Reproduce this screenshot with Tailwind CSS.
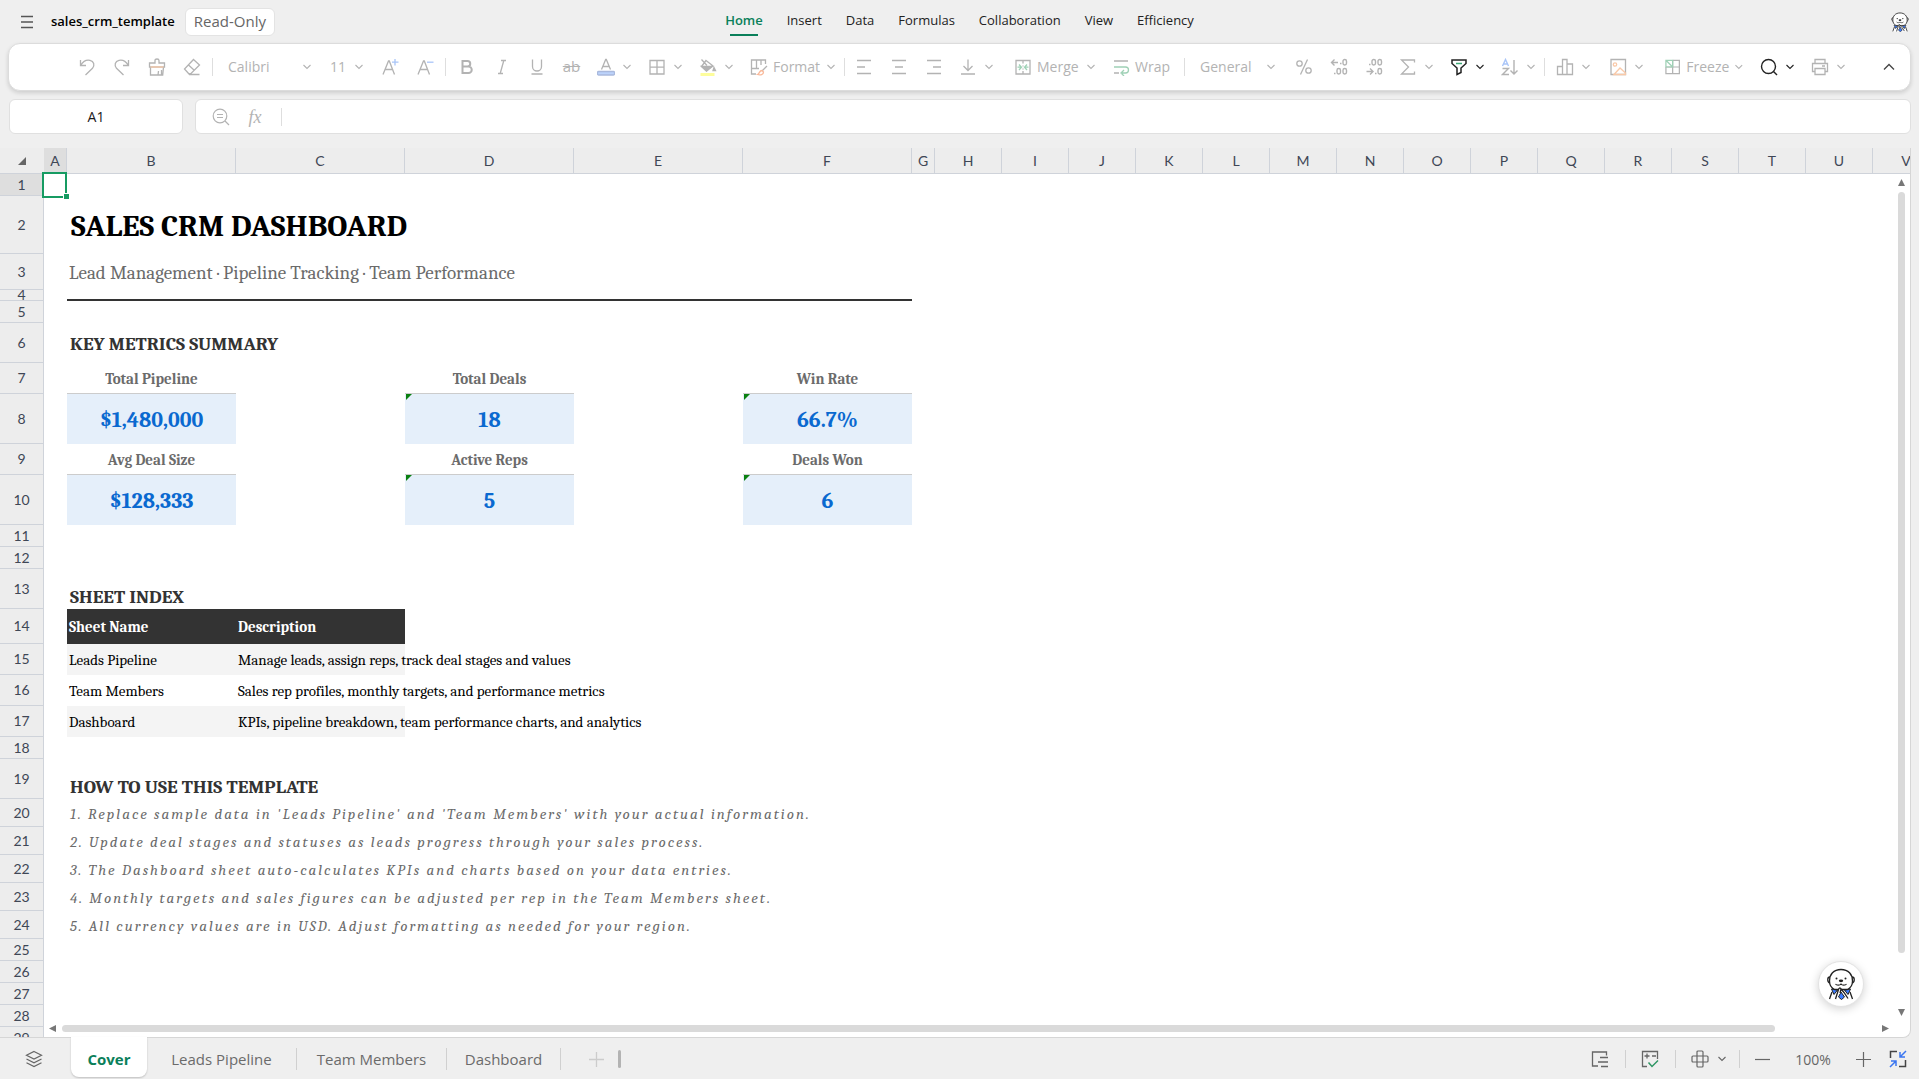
<!DOCTYPE html>
<html lang="en">
  <head>
    <meta charset="UTF-8" />
    <meta name="viewport" content="width=device-width, initial-scale=1.0" />
    <title>sales_crm_template</title>
    <script src="https://cdn.jsdelivr.net/npm/@tailwindcss/browser@4"></script>
  </head>

  <body class="h-screen flex flex-col overflow-hidden bg-[#efefef] text-[#1a1a1a] font-['Segoe_UI','Open_Sans',sans-serif]">
    <!-- Shared icons -->
    <svg class="hidden">
      <symbol id="chevron" viewBox="0 0 10 10">
        <path d="M1.500 3l3.500 3.500L8.500 3" fill="none" stroke="currentColor" stroke-width="1.100" />
      </symbol>
      <symbol id="otter" viewBox="0 0 32 32">
        <path d="M5 15c-3-1-3-6 0-6M27 15c3-1 3-6 0-6" fill="#fff" stroke="#222" stroke-width="1.300" />
        <path d="M7 20L4 31h24l-3-11z" fill="#fff" />
        <path d="M6.500 21l6 1-3.500 4.500zM25.500 21l-6 1 3.500 4.500z" fill="#3b7cff" stroke="#222" />
        <path d="M16 24l-2.500 5 3 2.500 3-2.500z" fill="#3b7cff" stroke="#222" />
        <path d="M7 24L4.500 31M25 24l2.500 7" stroke="#222" stroke-width="1.300" />
        <path d="M16 1.500c7.500 0 11.500 5 11.500 11.500 0 4-2 7-5 8.500h-13c-3-1.500-5-4.500-5-8.500C4.500 6.500 8.500 1.500 16 1.500z" fill="#fff" stroke="#222" stroke-width="1.300" />
        <path d="M10.500 31l3-9.500c.8-2.500 3-1.500 2.300.5l-.8 3M23 30.500l-4-6-3-3.500" fill="#fff" stroke="#222" stroke-width="1.300" />
        <path d="M10.500 16c1 1.500 4.500 1.500 5.500 0 1 1.500 4.500 1.500 5.500 0" fill="none" stroke="#222" stroke-width="1.100" />
        <ellipse cx="16" cy="12.800" rx="2.200" ry="1.400" fill="#222" />
        <circle cx="11.500" cy="10.500" r="1" fill="#222" />
        <circle cx="20.500" cy="10.500" r="1" fill="#222" />
      </symbol>
    </svg>

    <!-- Title bar -->
    <header class="h-[43px] shrink-0 flex justify-between px-[9px]">
      <div class="flex-1 flex items-center gap-[10px]">
        <button aria-label="Menu" class="p-[10px] pr-[6px]">
          <svg class="size-4" viewBox="0 0 16 16" stroke="#555" stroke-width="1.300"><path d="M2 2.500h12M2 8h12M2 13.500h12" /></svg>
        </button>
        <h1 class="text-[13px] font-semibold text-black">sales_crm_template</h1>
        <span class="h-[28px] flex items-center rounded-md border border-[#e3e3e3] bg-white px-2 text-[15px] text-[#666]">Read-Only</span>
      </div>
      <nav class="flex items-center gap-6 text-[13px] text-[#222] pb-[2px]">
        <a href="#" class="relative font-semibold text-[#0a7f5a]">Home<span class="absolute left-1/2 -bottom-[6px] -ml-[14px] h-[2px] w-[28px] bg-[#0a7f5a]"></span></a>
        <a href="#">Insert</a>
        <a href="#">Data</a>
        <a href="#">Formulas</a>
        <a href="#">Collaboration</a>
        <a href="#">View</a>
        <a href="#">Efficiency</a>
      </nav>
      <div class="flex-1 flex items-center justify-end">
        <button aria-label="Assistant"><svg class="size-5"><use href="#otter" /></svg></button>
      </div>
    </header>

    <!-- Toolbar -->
    <section aria-label="Toolbar" class="mx-2 h-[48px] shrink-0 flex items-center rounded-xl border border-[#dcdcdc] bg-white pb-px pl-[60px] pr-[12px] shadow-[0_2px_4px_rgba(0,0,0,0.14)] text-[14px] text-[#b3b3b3]">
      <button disabled aria-label="Undo" class="w-[35px] flex justify-center">
        <svg class="size-[18px]" viewBox="0 0 18 18" fill="none" stroke="currentColor" stroke-width="1.300"><path d="M2.500 2v5.500H8M2.800 7.200C5 3.500 8.500 1.500 12 2.300c4 1 5 5 2.500 8L7.500 17" /></svg>
      </button>
      <button disabled aria-label="Redo" class="w-[35px] flex justify-center">
        <svg class="size-[18px]" viewBox="0 0 18 18" fill="none" stroke="currentColor" stroke-width="1.300"><path d="M15.500 2v5.500H10M15.200 7.200C13 3.500 9.500 1.500 6 2.300c-4 1-5 5-2.500 8l7 6.700" /></svg>
      </button>
      <button disabled aria-label="Format painter" class="w-[35px] flex justify-center">
        <svg class="size-[18px]" viewBox="0 0 18 18" fill="none" stroke="currentColor" stroke-width="1.300"><path d="M7 5V2.500c0-1 .7-1.500 2-1.500s2 .5 2 1.500V5h5.500v4h-15V5zM2.500 9v8h12.200l.8-8M10 17l.5-4M13.500 17V12" /><path d="M2.500 9h13" stroke="#f9c9a8" /></svg>
      </button>
      <button disabled aria-label="Clear format" class="w-[35px] flex justify-center">
        <svg class="size-[18px]" viewBox="0 0 18 18" fill="none" stroke="currentColor" stroke-width="1.300"><path d="M10.500 1.500l6 5.500-8.500 8.500-2 .5-4.500-5zM5.500 7l6 5.500M6 16.500h10.500" /></svg>
      </button>
      <span class="mx-[3px] h-[18px] w-px bg-[#dedede]"></span>
      <label class="relative flex items-center">
        <select disabled aria-label="Font" class="w-[96px] appearance-none pl-3 opacity-100"><option>Calibri</option></select>
        <svg class="pointer-events-none absolute right-0 size-[10px]"><use href="#chevron" /></svg>
      </label>
      <label class="relative flex items-center">
        <select disabled aria-label="Font size" class="w-[52px] appearance-none pl-[18px] opacity-100"><option>11</option></select>
        <svg class="pointer-events-none absolute right-0 size-[10px]"><use href="#chevron" /></svg>
      </label>
      <button disabled aria-label="Increase font size" class="ml-2 w-[35px] flex justify-center">
        <svg class="size-[18px] overflow-visible" viewBox="0 0 18 18" fill="none" stroke="currentColor" stroke-width="1.300"><path d="M2 16.500L7.500 3h.8L13.500 16.500M4 11.500h8" /><path d="M14 1v6.500M11 4.200h6.500" stroke="#a9c5f8" /></svg>
      </button>
      <button disabled aria-label="Decrease font size" class="w-[35px] flex justify-center">
        <svg class="size-[18px] overflow-visible" viewBox="0 0 18 18" fill="none" stroke="currentColor" stroke-width="1.300"><path d="M2 16.500L7.500 3h.8L13.500 16.500M4 11.500h8" /><path d="M11 4.200h6.500" stroke="#a9c5f8" /></svg>
      </button>
      <span class="mx-[3px] h-[18px] w-px bg-[#dedede]"></span>
      <button disabled aria-label="Bold" class="w-[35px] flex justify-center">
        <svg class="size-[18px]" viewBox="0 0 18 18" fill="none" stroke="currentColor" stroke-width="2"><path d="M4.500 3h5a2.700 2.700 0 010 5.500h-5zM4.500 8.500h6a3.200 3.200 0 010 6.500h-6z" /></svg>
      </button>
      <button disabled aria-label="Italic" class="w-[35px] flex justify-center">
        <svg class="size-[18px]" viewBox="0 0 18 18" fill="none" stroke="currentColor" stroke-width="1.300"><path d="M8 2.500h5M5 15.500h5M10.800 2.500L7.200 15.500" /></svg>
      </button>
      <button disabled aria-label="Underline" class="w-[35px] flex justify-center">
        <svg class="size-[18px]" viewBox="0 0 18 18" fill="none" stroke="currentColor" stroke-width="1.300"><path d="M4.500 1.500v7a4.500 4.500 0 009 0v-7M3.500 16h11" /></svg>
      </button>
      <button disabled aria-label="Strikethrough" class="w-[35px] flex justify-center text-[15px] line-through leading-none">ab</button>
      <button disabled aria-label="Font color" class="w-[51px] px-2 flex items-center justify-between">
        <svg class="size-[18px]" viewBox="0 0 18 18" fill="none" stroke="currentColor" stroke-width="1.300"><path d="M4.500 11.500L8.700 1.500h.6l4.200 10M6 8.500h6" /><rect x=".5" y="13.500" width="17" height="3.500" rx="1" fill="#bcd3fb" stroke="#a9b9dd" /></svg>
        <svg class="size-[10px]"><use href="#chevron" /></svg>
      </button>
      <button disabled aria-label="Borders" class="w-[51px] px-2 flex items-center justify-between">
        <svg class="size-[18px]" viewBox="0 0 18 18" fill="none" stroke="currentColor" stroke-width="1.300"><path d="M2 2.500h14v13.500H2zM9 2.500V16M2 9.200h14" /></svg>
        <svg class="size-[10px]"><use href="#chevron" /></svg>
      </button>
      <button disabled aria-label="Fill color" class="w-[51px] px-2 flex items-center justify-between">
        <svg class="size-[18px]" viewBox="0 0 18 18" fill="none" stroke="currentColor" stroke-width="1.300"><path d="M7 2.500L13.500 7.500 7.500 13 2.500 8.500zM2.500 1.500L8 7.500" /><path d="M2.500 8.500h11L7.500 13zM15 9.500l1.500 3h-2.500z" fill="currentColor" /><rect x="1.500" y="15" width="14" height="3" fill="#fdfd9c" stroke="none" /></svg>
        <svg class="size-[10px]"><use href="#chevron" /></svg>
      </button>
      <button disabled class="w-[102px] px-2 flex items-center gap-[5px]">
        <svg class="size-[18px]" viewBox="0 0 18 18" fill="none" stroke="currentColor" stroke-width="1.300"><path d="M6 16H1.500V2h14v4M1.500 10.500H9M6.500 2v8.500M11 2v5M17 8l-5 5" /><path d="M12 12.500c-3 0-2 3-4.500 4 3 1 6 0 6-2.500z" stroke="#f9b99a" /></svg>
        Format
        <svg class="ml-auto size-[10px]"><use href="#chevron" /></svg>
      </button>
      <span class="mr-px h-[18px] w-px bg-[#dedede]"></span>
      <button disabled aria-label="Align left" class="w-[35px] flex justify-center">
        <svg class="size-[18px]" viewBox="0 0 18 18" stroke="currentColor" stroke-width="1.300"><path d="M2 2.500h14M2 9h8M2 15.500h14" /></svg>
      </button>
      <button disabled aria-label="Align center" class="w-[35px] flex justify-center">
        <svg class="size-[18px]" viewBox="0 0 18 18" stroke="currentColor" stroke-width="1.300"><path d="M2 2.500h14M5 9h8M2 15.500h14" /></svg>
      </button>
      <button disabled aria-label="Align right" class="w-[35px] flex justify-center">
        <svg class="size-[18px]" viewBox="0 0 18 18" stroke="currentColor" stroke-width="1.300"><path d="M2 2.500h14M8 9h8M2 15.500h14" /></svg>
      </button>
      <button disabled aria-label="Vertical align" class="w-[51px] px-2 flex items-center justify-between">
        <svg class="size-[18px]" viewBox="0 0 18 18" fill="none" stroke="currentColor" stroke-width="1.300"><path d="M9 1.500v11M4.500 8L9 12.500 13.500 8M2 16h14" /></svg>
        <svg class="size-[10px]"><use href="#chevron" /></svg>
      </button>
      <button disabled class="ml-1 w-[98px] px-2 flex items-center gap-[5px]">
        <svg class="size-[18px]" viewBox="0 0 18 18" fill="none" stroke="currentColor" stroke-width="1.300"><path d="M2 2.500h14v13.500H2zM9 2.500v3M9 13v3M9 7.500v1M9 10.500v1" /><path d="M3.500 9.200H7M5 6.500l2.500 2.700L5 12M14.500 9.200H11M13 6.500l-2.500 2.700L13 12" stroke="#9fd1b6" /></svg>
        Merge
        <svg class="ml-auto size-[10px]"><use href="#chevron" /></svg>
      </button>
      <button disabled class="w-[80px] px-2 flex items-center gap-[5px]">
        <svg class="size-[18px]" viewBox="0 0 18 18" fill="none" stroke="currentColor" stroke-width="1.300"><path d="M2 3h14M2 15h5" /><path d="M2 9h11.500a3 3 0 010 6H10M12 12l-3 3 3 3" stroke="#9fd1b6" /></svg>
        Wrap
      </button>
      <span class="mr-[3px] h-[18px] w-px bg-[#dedede]"></span>
      <label class="relative flex items-center">
        <select disabled aria-label="Number format" class="w-[88px] appearance-none pl-3 opacity-100"><option>General</option></select>
        <svg class="pointer-events-none absolute right-0 size-[10px]"><use href="#chevron" /></svg>
      </label>
      <button disabled aria-label="Percent" class="ml-[10px] w-[35px] flex justify-center">
        <svg class="size-[18px]" viewBox="0 0 18 18" fill="none" stroke="currentColor" stroke-width="1.300"><circle cx="4.500" cy="5.500" r="2.700" /><circle cx="13.500" cy="12.500" r="2.700" /><path d="M12.500 1.500l-7 15" /></svg>
      </button>
      <button disabled aria-label="Decrease decimals" class="w-[35px] flex justify-center">
        <svg class="size-[18px]" viewBox="0 0 18 18" fill="none" stroke="currentColor" stroke-width="1.400"><path d="M8 4.500H2M4.500 1.500l-3 3 3 3" /><path d="M10 5.500h1.500M4 15.500h1.500" /><rect x="13" y="1.500" width="3.500" height="5.500" rx="1.700" /><rect x="7" y="10.500" width="3.500" height="5.500" rx="1.700" /><rect x="13" y="10.500" width="3.500" height="5.500" rx="1.700" /></svg>
      </button>
      <button disabled aria-label="Increase decimals" class="w-[35px] flex justify-center">
        <svg class="size-[18px]" viewBox="0 0 18 18" fill="none" stroke="currentColor" stroke-width="1.400"><path d="M1.500 13.500h6M5 10.500l3 3-3 3" /><path d="M4 6.500h1.500M10 15.500h1.500" /><rect x="7" y="1.500" width="3.500" height="5.500" rx="1.700" /><rect x="13" y="1.500" width="3.500" height="5.500" rx="1.700" /><rect x="13" y="10.500" width="3.500" height="5.500" rx="1.700" /></svg>
      </button>
      <button disabled aria-label="Sum" class="w-[51px] px-2 flex items-center justify-between">
        <svg class="size-[18px]" viewBox="0 0 18 18" fill="none" stroke="currentColor" stroke-width="1.300"><path d="M15.500 4.500V2H2.500L9.500 9l-7 7h13v-2.500" /></svg>
        <svg class="size-[10px]"><use href="#chevron" /></svg>
      </button>
      <button aria-label="Filter" class="w-[51px] px-2 flex items-center justify-between text-[#222]">
        <svg class="size-[18px]" viewBox="0 0 18 18" fill="none" stroke="currentColor" stroke-width="1.500"><path d="M2 2h14v3.500L11 10v4.500L7 16.500V10L2 5.500z" /><path d="M6 5.500h6" stroke="#3fa877" /></svg>
        <svg class="size-[10px]"><use href="#chevron" /></svg>
      </button>
      <button disabled aria-label="Sort" class="w-[51px] px-2 flex items-center justify-between">
        <svg class="size-[18px]" viewBox="0 0 18 18" fill="none" stroke="currentColor" stroke-width="1.400"><path d="M1.500 8L4.500 1.500 7.500 8M2.500 6h4" stroke="#a9c5f8" /><path d="M1.500 10.500h6l-6 6h6.500M13 2v14M9.500 12.500L13 16l3.500-3.500" /></svg>
        <svg class="size-[10px]"><use href="#chevron" /></svg>
      </button>
      <span class="mr-[3px] h-[18px] w-px bg-[#dedede]"></span>
      <button disabled aria-label="Chart" class="w-[51px] px-2 flex items-center justify-between">
        <svg class="size-[18px]" viewBox="0 0 18 18" fill="none" stroke="currentColor" stroke-width="1.300"><path d="M1.500 8.500h5V16.500h-5zM6.500 1.500h4.500v15H6.500zM11 6h5.500v10.500H11z" /></svg>
        <svg class="size-[10px]"><use href="#chevron" /></svg>
      </button>
      <button disabled aria-label="Picture" class="w-[51px] px-2 ml-[2px] flex items-center justify-between">
        <svg class="size-[18px]" viewBox="0 0 18 18" fill="none" stroke="currentColor" stroke-width="1.300"><path d="M2 16.500V1.500h14.500v15z" /><path d="M5 16.500l6-6.500 5.500 5v1.500z" stroke="#f9c9a8" /><circle cx="6" cy="6.500" r="1.700" stroke="#f9c9a8" /></svg>
        <svg class="size-[10px]"><use href="#chevron" /></svg>
      </button>
      <button disabled class="ml-1 w-[96px] px-2 flex items-center gap-[5px]">
        <svg class="size-[18px]" viewBox="0 0 18 18" fill="none" stroke="currentColor" stroke-width="1.300"><path d="M9 2h7v14H2V9M9 2v14M2 9h14" /><path d="M9 9V2H2v7zM2 2l7 7" stroke="#9fd1b6" /></svg>
        Freeze
        <svg class="ml-auto size-[10px]"><use href="#chevron" /></svg>
      </button>
      <button aria-label="Search" class="w-[51px] px-2 flex items-center justify-between text-[#222]">
        <svg class="size-[18px]" viewBox="0 0 18 18" fill="none" stroke="currentColor" stroke-width="1.400"><circle cx="8.500" cy="8.500" r="7" /><path d="M13.500 13.500l3.500 3.500" /></svg>
        <svg class="size-[10px]"><use href="#chevron" /></svg>
      </button>
      <button disabled aria-label="Print" class="w-[51px] px-2 flex items-center justify-between">
        <svg class="size-[18px]" viewBox="0 0 18 18" fill="none" stroke="currentColor" stroke-width="1.300"><path d="M4 5.500v-4h10v4M4 13.500H1.500v-8h15v8H14M4 10.500h10v6H4zM11 8h3" /></svg>
        <svg class="size-[10px]"><use href="#chevron" /></svg>
      </button>
      <button aria-label="Collapse toolbar" class="ml-auto p-[3px] text-[#444]">
        <svg class="size-3" viewBox="0 0 12 12" fill="none" stroke="currentColor" stroke-width="1.300"><path d="M1 8.500l5-5 5 5" /></svg>
      </button>
    </section>

    <!-- Formula bar -->
    <section aria-label="Formula bar" class="mt-2 ml-[9px] mr-2 h-[35px] shrink-0 flex gap-3">
      <input aria-label="Name box" value="A1" class="w-[174px] rounded-md border border-[#e0e0e0] bg-white text-center text-[14px]" />
      <div class="flex-1 flex items-center rounded-md border border-[#e0e0e0] bg-white pl-4 text-[#b3b3b3]">
        <svg class="size-[18px]" viewBox="0 0 18 18" fill="none" stroke="currentColor" stroke-width="1.200"><circle cx="8" cy="8" r="6.800" /><path d="M13 13l4 4M5 6.500h6M5 9.500h6" /></svg>
        <button disabled aria-label="Insert function" class="ml-4 w-[18px] font-['Liberation_Serif',serif] italic text-[18px] leading-none">fx</button>
        <span class="ml-[17px] h-[18px] w-px bg-[#dedede]"></span>
        <input aria-label="Formula" class="flex-1 px-2 text-[14px] outline-none" />
      </div>
    </section>

    <!-- Sheet -->
    <main class="relative mt-[14px] mr-2 flex-1 min-h-0 overflow-hidden rounded-br-lg border-r border-b border-[#d6d6d6] bg-white">
      <table class="w-[1940px] table-fixed border-separate border-spacing-0 font-['Cambria','Caladea','Liberation_Serif',serif] text-[15px] text-black whitespace-nowrap leading-none">
        <colgroup>
          <col class="w-[44px]" /><col class="w-[23px]" />
          <col class="w-[169px]" /><col class="w-[169px]" /><col class="w-[169px]" /><col class="w-[169px]" /><col class="w-[169px]" />
          <col class="w-[23px]" />
          <col class="w-[67px]" /><col class="w-[67px]" /><col class="w-[67px]" /><col class="w-[67px]" /><col class="w-[67px]" /><col class="w-[67px]" /><col class="w-[67px]" />
          <col class="w-[67px]" /><col class="w-[67px]" /><col class="w-[67px]" /><col class="w-[67px]" /><col class="w-[67px]" /><col class="w-[67px]" /><col class="w-[67px]" /><col class="w-[67px]" />
        </colgroup>
        <thead class="bg-[#ededed] font-['Lato',sans-serif] text-[14px] text-[#3f4756] [&_th]:font-normal [&_th]:border-r [&_th]:border-b [&_th]:border-[#cfd3da]">
          <tr class="h-[26px]">
            <th class="border-r-transparent!"><svg class="mx-auto size-2" viewBox="0 0 8 8"><path d="M8 0v8H0z" fill="#666" /></svg></th>
            <th class="bg-[#dedede]">A</th><th>B</th><th>C</th><th>D</th><th>E</th><th>F</th><th>G</th>
            <th>H</th><th>I</th><th>J</th><th>K</th><th>L</th><th>M</th><th>N</th><th>O</th><th>P</th><th>Q</th><th>R</th><th>S</th><th>T</th><th>U</th><th>V</th>
          </tr>
        </thead>
        <tbody class="[&_td]:pt-[2px] [&_th]:bg-[#ededed] [&_th]:border-r [&_th]:border-b [&_th]:border-[#cfd3da] [&_th]:font-['Lato',sans-serif] [&_th]:text-[14px] [&_th]:leading-[10px] [&_th]:font-normal [&_th]:text-[#3f4756]">
          <tr class="h-[22px]">
            <th class="bg-[#dedede]!">1</th>
            <td class="relative">
              <span class="absolute -inset-y-[2px] -left-[2px] right-0 border-2 border-[#169b62]"></span>
              <span class="absolute -right-[2px] -bottom-[3px] size-[5px] bg-[#169b62] outline outline-white"></span>
            </td>
            <td colspan="21"></td>
          </tr>
          <tr class="h-[58px]"><th>2</th><td></td><td colspan="5" class="pl-1 text-[31px] font-bold">SALES CRM DASHBOARD</td><td colspan="16"></td></tr>
          <tr class="h-[36px]"><th>3</th><td></td><td colspan="5" class="pl-[2px] text-[19px] text-[#6b6b6b]">Lead Management · Pipeline Tracking · Team Performance</td><td colspan="16"></td></tr>
          <tr class="h-[11px]"><th>4</th><td></td><td colspan="5" class="border-b-2 border-[#333]"></td><td colspan="16"></td></tr>
          <tr class="h-[22px]"><th>5</th><td colspan="22"></td></tr>
          <tr class="h-[40px]"><th>6</th><td></td><td colspan="5" class="pl-[3px] text-[19px] font-bold text-[#333]">KEY METRICS SUMMARY</td><td colspan="16"></td></tr>
          <tr class="h-[31px] text-center font-bold text-[#6b6b6b]">
            <th>7</th><td></td>
            <td class="border-b border-[#ccc]">Total Pipeline</td><td></td>
            <td class="border-b border-[#ccc]">Total Deals</td><td></td>
            <td class="border-b border-[#ccc]">Win Rate</td><td colspan="16"></td>
          </tr>
          <tr class="h-[50px] text-center text-[22px] font-bold text-[#0a69d0]">
            <th>8</th><td></td>
            <td class="bg-[#e5effa]">$1,480,000</td><td></td>
            <td class="relative bg-[#e5effa]"><svg class="absolute left-px top-0 size-[6px]" viewBox="0 0 6 6"><path d="M0 0h6L0 6z" fill="#0a8010" /></svg>18</td><td></td>
            <td class="relative bg-[#e5effa]"><svg class="absolute left-px top-0 size-[6px]" viewBox="0 0 6 6"><path d="M0 0h6L0 6z" fill="#0a8010" /></svg>66.7%</td><td colspan="16"></td>
          </tr>
          <tr class="h-[31px] text-center font-bold text-[#6b6b6b]">
            <th>9</th><td></td>
            <td class="border-b border-[#ccc]">Avg Deal Size</td><td></td>
            <td class="border-b border-[#ccc]">Active Reps</td><td></td>
            <td class="border-b border-[#ccc]">Deals Won</td><td colspan="16"></td>
          </tr>
          <tr class="h-[50px] text-center text-[22px] font-bold text-[#0a69d0]">
            <th>10</th><td></td>
            <td class="bg-[#e5effa]">$128,333</td><td></td>
            <td class="relative bg-[#e5effa]"><svg class="absolute left-px top-0 size-[6px]" viewBox="0 0 6 6"><path d="M0 0h6L0 6z" fill="#0a8010" /></svg>5</td><td></td>
            <td class="relative bg-[#e5effa]"><svg class="absolute left-px top-0 size-[6px]" viewBox="0 0 6 6"><path d="M0 0h6L0 6z" fill="#0a8010" /></svg>6</td><td colspan="16"></td>
          </tr>
          <tr class="h-[22px]"><th>11</th><td colspan="22"></td></tr>
          <tr class="h-[22px]"><th>12</th><td colspan="22"></td></tr>
          <tr class="h-[40px]"><th>13</th><td></td><td colspan="5" class="pl-[3px] pb-[2px] align-bottom text-[19px] font-bold text-[#333]">SHEET INDEX</td><td colspan="16"></td></tr>
          <tr class="h-[35px] font-bold text-white"><th>14</th><td></td><td class="bg-[#333] pl-[2px]">Sheet Name</td><td class="bg-[#333] pl-[2px]">Description</td><td colspan="19"></td></tr>
          <tr class="h-[31px]"><th>15</th><td></td><td class="bg-[#f4f4f4] pl-[2px]">Leads Pipeline</td><td class="bg-[#f4f4f4] pl-[2px]">Manage leads, assign reps, track deal stages and values</td><td colspan="19"></td></tr>
          <tr class="h-[31px]"><th>16</th><td></td><td class="pl-[2px]">Team Members</td><td class="pl-[2px]">Sales rep profiles, monthly targets, and performance metrics</td><td colspan="19"></td></tr>
          <tr class="h-[31px]"><th>17</th><td></td><td class="bg-[#f4f4f4] pl-[2px]">Dashboard</td><td class="bg-[#f4f4f4] pl-[2px]">KPIs, pipeline breakdown, team performance charts, and analytics</td><td colspan="19"></td></tr>
          <tr class="h-[22px]"><th>18</th><td colspan="22"></td></tr>
          <tr class="h-[40px]"><th>19</th><td></td><td colspan="5" class="pl-[3px] pb-[2px] align-bottom text-[19px] font-bold text-[#333]">HOW TO USE THIS TEMPLATE</td><td colspan="16"></td></tr>
          <tr class="h-[28px] italic tracking-[2px] text-[#6b6b6b]"><th class="not-italic tracking-normal">20</th><td></td><td colspan="21" class="pl-[3px]">1. Replace sample data in 'Leads Pipeline' and 'Team Members' with your actual information.</td></tr>
          <tr class="h-[28px] italic tracking-[2px] text-[#6b6b6b]"><th class="not-italic tracking-normal">21</th><td></td><td colspan="21" class="pl-[3px]">2. Update deal stages and statuses as leads progress through your sales process.</td></tr>
          <tr class="h-[28px] italic tracking-[2px] text-[#6b6b6b]"><th class="not-italic tracking-normal">22</th><td></td><td colspan="21" class="pl-[3px]">3. The Dashboard sheet auto-calculates KPIs and charts based on your data entries.</td></tr>
          <tr class="h-[28px] italic tracking-[2px] text-[#6b6b6b]"><th class="not-italic tracking-normal">23</th><td></td><td colspan="21" class="pl-[3px]">4. Monthly targets and sales figures can be adjusted per rep in the Team Members sheet.</td></tr>
          <tr class="h-[28px] italic tracking-[2px] text-[#6b6b6b]"><th class="not-italic tracking-normal">24</th><td></td><td colspan="21" class="pl-[3px]">5. All currency values are in USD. Adjust formatting as needed for your region.</td></tr>
          <tr class="h-[22px]"><th>25</th><td colspan="22"></td></tr>
          <tr class="h-[22px]"><th>26</th><td colspan="22"></td></tr>
          <tr class="h-[22px]"><th>27</th><td colspan="22"></td></tr>
          <tr class="h-[22px]"><th>28</th><td colspan="22"></td></tr>
          <tr class="h-[22px]"><th>29</th><td colspan="22"></td></tr>
        </tbody>
      </table>

      <!-- Scrollbars -->
      <div class="absolute right-0 top-[26px] bottom-4 w-[17px] flex flex-col items-center gap-[6px] bg-white py-[5px]">
        <svg class="size-[7px]" viewBox="0 0 8 8"><path d="M4 0l4 8H0z" fill="#777" /></svg>
        <div class="w-[7px] flex-1 rounded-full bg-[#dadada]"></div>
        <div class="h-[44px]"></div>
        <svg class="size-[7px]" viewBox="0 0 8 8"><path d="M0 0h8L4 8z" fill="#777" /></svg>
      </div>
      <div class="absolute left-[44px] right-4 bottom-0 h-[17px] flex items-center gap-[6px] bg-white px-[5px]">
        <svg class="size-[7px]" viewBox="0 0 8 8"><path d="M8 0v8L0 4z" fill="#777" /></svg>
        <div class="h-[7px] flex-1 rounded-full bg-[#dadada]"></div>
        <div class="w-[95px]"></div>
        <svg class="size-[7px]" viewBox="0 0 8 8"><path d="M0 0v8l8-4z" fill="#777" /></svg>
      </div>

      <!-- Assistant -->
      <button aria-label="Open assistant" class="absolute right-[46px] bottom-[30px] size-[46px] flex items-center justify-center rounded-full border border-[#e3e3e3] bg-white shadow-[0_2px_10px_rgba(0,0,0,0.18)]">
        <svg class="size-8"><use href="#otter" /></svg>
      </button>
    </main>

    <!-- Sheet tabs and status bar -->
    <footer class="h-[41px] shrink-0 flex items-start pl-[25px] pr-[12px] text-[15px] text-[#6b6b6b]">
      <button aria-label="All sheets" class="mt-3">
        <svg class="size-[18px]" viewBox="0 0 18 18" fill="none" stroke="#666" stroke-width="1.200"><path d="M9 1.500l7.500 3.800L9 9 1.500 5.300zM1.500 9L9 12.800 16.500 9M1.500 12.700L9 16.500l7.500-3.800" /></svg>
      </button>
      <nav class="ml-7 flex">
        <a href="#" class="-mt-px h-[40px] w-[76px] pt-1 flex items-center justify-center rounded-b-lg bg-white font-bold text-[#0a7f5a] shadow-[0_1px_2px_rgba(0,0,0,0.2)] z-10">Cover</a>
        <a href="#" class="h-[43px] w-[149px] flex items-center justify-center">Leads Pipeline</a>
        <span class="mt-[10px] h-[22px] w-px bg-[#d0d0d0]"></span>
        <a href="#" class="h-[43px] w-[149px] flex items-center justify-center">Team Members</a>
        <span class="mt-[10px] h-[22px] w-px bg-[#d0d0d0]"></span>
        <a href="#" class="h-[43px] w-[113px] flex items-center justify-center">Dashboard</a>
        <span class="mt-[10px] h-[22px] w-px bg-[#d0d0d0]"></span>
      </nav>
      <button disabled aria-label="Add sheet" class="ml-7 mt-[14px]">
        <svg class="size-[15px]" viewBox="0 0 15 15" stroke="#ccc" stroke-width="1.300"><path d="M7.500 0v15M0 7.500h15" /></svg>
      </button>
      <span class="ml-[14px] mt-3 h-[18px] w-[3px] rounded-full bg-[#b3b3b3]"></span>

      <div class="ml-auto mt-[9px] h-[24px] flex items-center text-[#666]">
        <button aria-label="Outline">
          <svg class="size-[18px]" viewBox="0 0 18 18" fill="none" stroke="currentColor" stroke-width="1.300"><path d="M7 16H1.500V2h14v3.500M9 7.500h8M7 12h10M10 16.500h7" /></svg>
        </button>
        <span class="ml-4 h-[18px] w-px bg-[#d0d0d0]"></span>
        <button aria-label="Check sheet" class="ml-[15px]">
          <svg class="size-[18px]" viewBox="0 0 18 18" fill="none" stroke="currentColor" stroke-width="1.300"><path d="M6 16.500H1.500V1.500h15V9M3.500 6h5M6 3.500v5M11 6h4" /><path d="M7.500 12.500l3.500 4 6-6" stroke="#2f9664" stroke-width="1.500" /></svg>
        </button>
        <span class="ml-4 h-[18px] w-px bg-[#d0d0d0]"></span>
        <button aria-label="Crosshair" class="ml-[15px] flex items-center gap-2">
          <svg class="size-[18px]" viewBox="0 0 18 18" fill="none" stroke="currentColor" stroke-width="1.200"><rect x="6" y="1" width="6" height="16" rx="1" /><rect x="1" y="6" width="16" height="6" rx="1" /></svg>
          <svg class="size-[10px]"><use href="#chevron" /></svg>
        </button>
        <span class="ml-3 h-[18px] w-px bg-[#d0d0d0]"></span>
        <button aria-label="Zoom out" class="ml-[15px]">
          <svg class="size-[15px]" viewBox="0 0 15 15" stroke="currentColor" stroke-width="1.200"><path d="M0 7.500h15" /></svg>
        </button>
        <span class="w-[86px] text-center text-[14px]">100%</span>
        <button aria-label="Zoom in">
          <svg class="size-[15px]" viewBox="0 0 15 15" stroke="currentColor" stroke-width="1.200"><path d="M7.500 0v15M0 7.500h15" /></svg>
        </button>
        <button aria-label="Full screen" class="ml-[18px]">
          <svg class="size-[18px]" viewBox="0 0 18 18" fill="none" stroke="#444" stroke-width="1.500"><path d="M8 1.500H1.500V8M10 16.500h6.500V10" /><path d="M17 1l-5.500 5.500M11 2v5h5M1 17l5.500-5.500M2 11h5v5" stroke="#3b76f0" /></svg>
        </button>
      </div>
    </footer>
  </body>
</html>
